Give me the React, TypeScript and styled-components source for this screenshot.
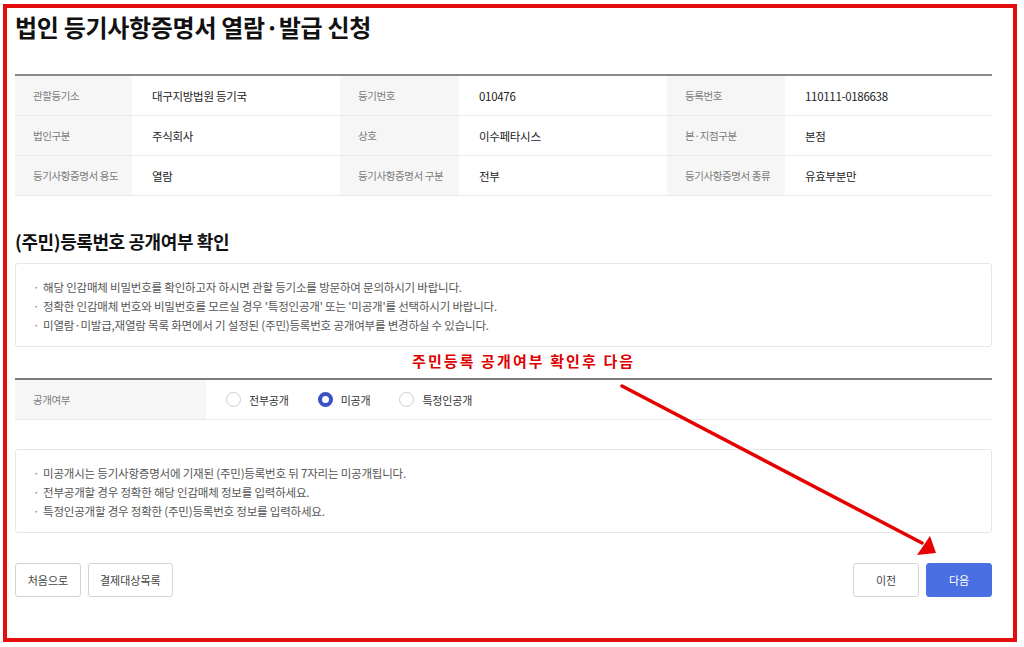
import { createGlobalStyle } from "styled-components";
import styled from "styled-components";

const GlobalStyle = createGlobalStyle`
  html, body {
    margin: 0;
    padding: 0;
    background: #ffffff;
  }
  body {
    font-family: "Noto Sans CJK KR", "Noto Sans", sans-serif;
    color: #222;
  }
`;

const summary = [
  [
    { label: "관할등기소", value: "대구지방법원 등기국" },
    { label: "등기번호", value: "010476" },
    { label: "등록번호", value: "110111-0186638" },
  ],
  [
    { label: "법인구분", value: "주식회사" },
    { label: "상호", value: "이수페타시스" },
    { label: "본·지점구분", value: "본점" },
  ],
  [
    { label: "등기사항증명서 용도", value: "열람" },
    { label: "등기사항증명서 구분", value: "전부" },
    { label: "등기사항증명서 종류", value: "유효부분만" },
  ],
];

const noticeTop = [
  "해당 인감매체 비밀번호를 확인하고자 하시면 관할 등기소를 방문하여 문의하시기 바랍니다.",
  "정확한 인감매체 번호와 비밀번호를 모르실 경우 '특정인공개' 또는 '미공개'를 선택하시기 바랍니다.",
  "미열람·미발급,재열람 목록 화면에서 기 설정된 (주민)등록번호 공개여부를 변경하실 수 있습니다.",
];

const noticeBottom = [
  "미공개시는 등기사항증명서에 기재된 (주민)등록번호 뒤 7자리는 미공개됩니다.",
  "전부공개할 경우 정확한 해당 인감매체 정보를 입력하세요.",
  "특정인공개할 경우 정확한 (주민)등록번호 정보를 입력하세요.",
];

const options = [
  { label: "전부공개", checked: false },
  { label: "미공개", checked: true },
  { label: "특정인공개", checked: false },
];

const App = () => {
  return (
    <Page>
      <GlobalStyle />
      <Frame>
        <Title>법인 등기사항증명서 열람·발급 신청</Title>
        <SummaryTable>
          {summary.map((row) =>
            row.map((cell) => [
              <LabelCell key={cell.label + "-l"}>{cell.label}</LabelCell>,
              <ValueCell key={cell.label + "-v"}>{cell.value}</ValueCell>,
            ])
          )}
        </SummaryTable>

        <SectionTitle>(주민)등록번호 공개여부 확인</SectionTitle>
        <NoticeBox>
          {noticeTop.map((t) => (
            <NoticeLine key={t}>{t}</NoticeLine>
          ))}
        </NoticeBox>

        <Annotation>주민등록 공개여부 확인후 다음</Annotation>

        <RadioTable>
          <LabelCell>공개여부</LabelCell>
          <RadioCell>
            {options.map((o) => (
              <RadioOption key={o.label}>
                <RadioDot $checked={o.checked} />
                {o.label}
              </RadioOption>
            ))}
          </RadioCell>
        </RadioTable>

        <NoticeBox $gap>
          {noticeBottom.map((t) => (
            <NoticeLine key={t}>{t}</NoticeLine>
          ))}
        </NoticeBox>

        <ButtonBar>
          <ButtonGroup>
            <Button>처음으로</Button>
            <Button>결제대상목록</Button>
          </ButtonGroup>
          <ButtonGroup>
            <Button>이전</Button>
            <Button $primary>다음</Button>
          </ButtonGroup>
        </ButtonBar>
      </Frame>

      <ArrowOverlay width="1024" height="647" viewBox="0 0 1024 647">
        <line
          x1="622"
          y1="386"
          x2="922"
          y2="543"
          stroke="#e60000"
          strokeWidth="3.5"
          strokeLinecap="round"
        />
        <polygon points="917,555 930,536 936,553" fill="#e60000" />
      </ArrowOverlay>
    </Page>
  );
};

const Page = styled.div`
  position: relative;
  width: 1024px;
  height: 647px;
  overflow: hidden;
`;

const Frame = styled.div`
  box-sizing: border-box;
  width: 1014px;
  height: 638px;
  margin: 4px 0 0 3px;
  border: 4px solid #e30d0d;
  padding: 3px 21px 0 8px;
  display: flex;
  flex-direction: column;
`;

const Title = styled.h1`
  margin: 0;
  font-size: 24px;
  line-height: 32px;
  font-weight: 700;
  color: #111;
  letter-spacing: -0.3px;
`;

const SummaryTable = styled.div`
  margin-top: 31px;
  display: grid;
  grid-template-columns: 118px 207px 120px 207px 119px 1fr;
  border-top: 2px solid #8a8a8a;
`;

const LabelCell = styled.div`
  height: 40px;
  box-sizing: border-box;
  display: flex;
  align-items: center;
  padding-left: 18px;
  background: #f6f6f6;
  border-bottom: 1px solid #e9e9e9;
  border-right: 1px solid #ffffff;
  font-size: 10.5px;
  color: #7a7a7a;
  letter-spacing: -0.4px;
`;

const ValueCell = styled.div`
  height: 40px;
  box-sizing: border-box;
  display: flex;
  align-items: center;
  padding-left: 19px;
  border-bottom: 1px solid #e9e9e9;
  font-size: 11.5px;
  color: #222;
  letter-spacing: -0.3px;
`;

const SectionTitle = styled.h2`
  margin: 33px 0 0;
  font-size: 18px;
  line-height: 24px;
  font-weight: 700;
  color: #111;
  letter-spacing: -0.4px;
`;

const NoticeBox = styled.div<{ $gap?: boolean }>`
  box-sizing: border-box;
  margin-top: ${(p) => (p.$gap ? "29px" : "10px")};
  height: 84px;
  padding: 14px 15px 0;
  border: 1px solid #e6e6e6;
  border-radius: 3px;
`;

const NoticeLine = styled.div`
  font-size: 11.5px;
  line-height: 19px;
  color: #555;
  letter-spacing: -0.2px;
  &::before {
    content: "·";
    display: inline-block;
    width: 12px;
    padding-left: 2px;
    box-sizing: border-box;
    color: #777;
  }
`;

const Annotation = styled.div`
  margin-top: 4px;
  height: 20px;
  line-height: 20px;
  padding-left: 397px;
  font-size: 15px;
  font-weight: 700;
  color: #e00000;
  letter-spacing: 2.1px;
`;

const RadioTable = styled.div`
  margin-top: 7px;
  display: grid;
  grid-template-columns: 192px 1fr;
  border-top: 2px solid #7a7a7a;
`;

const RadioCell = styled.div`
  height: 40px;
  box-sizing: border-box;
  display: flex;
  align-items: center;
  gap: 29px;
  padding-left: 19px;
  border-bottom: 1px solid #e9e9e9;
`;

const RadioOption = styled.label`
  display: flex;
  align-items: center;
  gap: 8px;
  font-size: 11px;
  color: #333;
  letter-spacing: -0.2px;
`;

const RadioDot = styled.span<{ $checked?: boolean }>`
  box-sizing: border-box;
  width: 15px;
  height: 15px;
  border-radius: 50%;
  background: #fff;
  border: ${(p) => (p.$checked ? "4px solid #3b50c4" : "1px solid #cfcfcf")};
`;

const ButtonBar = styled.div`
  margin-top: 30px;
  display: flex;
  justify-content: space-between;
`;

const ButtonGroup = styled.div`
  display: flex;
  gap: 7px;
`;

const Button = styled.button<{ $primary?: boolean }>`
  box-sizing: border-box;
  height: 34px;
  min-width: 66px;
  padding: 0 11px;
  border-radius: 3px;
  font-family: inherit;
  font-size: 11px;
  letter-spacing: 0;
  cursor: pointer;
  border: 1px solid ${(p) => (p.$primary ? "#4a6fe3" : "#d4d4d4")};
  background: ${(p) => (p.$primary ? "#4a6fe3" : "#ffffff")};
  color: ${(p) => (p.$primary ? "#ffffff" : "#444")};
`;

const ArrowOverlay = styled.svg`
  position: absolute;
  left: 0;
  top: 0;
  pointer-events: none;
`;

export default App;
